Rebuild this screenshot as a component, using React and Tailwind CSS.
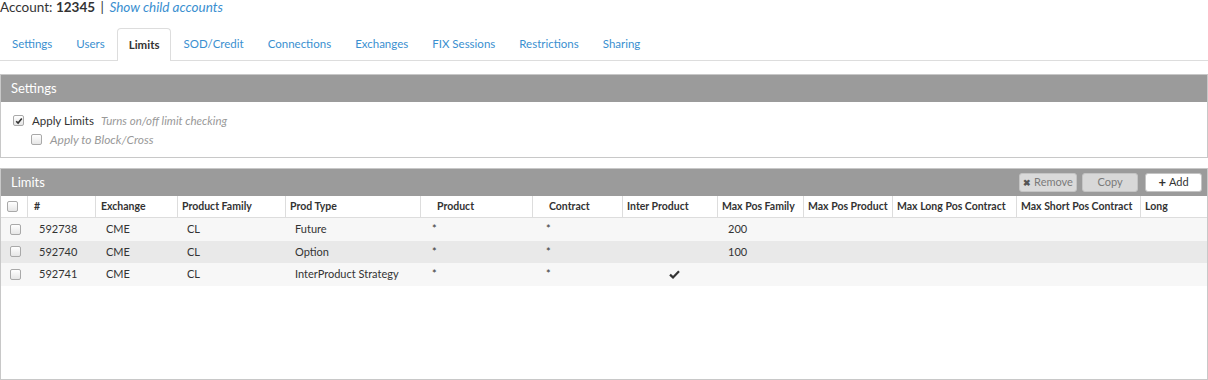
import React from "react";

const tabs = ["Settings", "Users", "Limits", "SOD/Credit", "Connections", "Exchanges", "FIX Sessions", "Restrictions", "Sharing"];

const cols = [
  { name: "", hp: "pl-[6px]", dp: "pl-[9px]" },
  { name: "#", hp: "pl-[6px]", dp: "pl-[11px]" },
  { name: "Exchange", hp: "pl-[5px]", dp: "pl-[10px]" },
  { name: "Product Family", hp: "pl-[4px]", dp: "pl-[9px]" },
  { name: "Prod Type", hp: "pl-[4px]", dp: "pl-[9px]" },
  { name: "Product", hp: "pl-[16px]", dp: "pl-[11px]" },
  { name: "Contract", hp: "pl-[16px]", dp: "pl-[13px]" },
  { name: "Inter Product", hp: "pl-[4px]", dp: "pl-[46px]" },
  { name: "Max Pos Family", hp: "pl-[4px]", dp: "pl-[10px]" },
  { name: "Max Pos Product", hp: "pl-[4px]", dp: "pl-[10px]" },
  { name: "Max Long Pos Contract", hp: "pl-[4px]", dp: "pl-[10px]" },
  { name: "Max Short Pos Contract", hp: "pl-[4px]", dp: "pl-[10px]" },
  { name: "Long", hp: "pl-[4px]", dp: "pl-[10px]" },
];

const rows = [
  { id: "592738", type: "Future", inter: false, fam: "200", bg: "bg-[#f7f7f7]" },
  { id: "592740", type: "Option", inter: false, fam: "100", bg: "bg-[#e9e9e9]" },
  { id: "592741", type: "InterProduct Strategy", inter: true, fam: "", bg: "bg-[#f7f7f7]" },
];

const grid = "grid grid-cols-[27px_68px_82px_108px_135px_112px_90px_95px_86px_89px_124px_124px_66px]";

function Box({ checked }) {
  return (
    <span className="inline-flex h-[11px] w-[11px] items-center justify-center rounded-[2px] border border-[#a9a9a9] bg-gradient-to-b from-[#ffffff] to-[#e6e6e6]">
      {checked && (
        <svg width="8" height="8" viewBox="0 0 8 8">
          <path d="M1.2 4.2 L3.1 6.1 L6.8 1.6" fill="none" stroke="#333" strokeWidth="1.6" />
        </svg>
      )}
    </span>
  );
}

function Check() {
  return (
    <svg width="11" height="9" viewBox="0 0 11 9">
      <path d="M1 4.6 L4 7.4 L10 1.2" fill="none" stroke="#333" strokeWidth="2.2" />
    </svg>
  );
}

export default function App() {
  return (
    <div className="w-[1208px] h-[380px] overflow-hidden bg-white font-['Lato',sans-serif] text-[#333]">
      <div className="h-[14px] text-[13.5px] leading-[14px] text-[#333] whitespace-nowrap">
        Account: <b className="font-bold">12345</b> <span className="px-[2px]">|</span>{" "}
        <a className="italic text-[#3a8fd0]">Show child accounts</a>
      </div>
      <div className="mt-[14px] flex h-[33px] border-b border-[#dddddd] text-[11.5px]">
        {tabs.map((t) => (
          <div
            key={t}
            className={
              t === "Limits"
                ? "-mb-px flex items-center rounded-t-[4px] border border-b-0 border-[#dddddd] bg-white px-[11px] font-bold text-[#333]"
                : "flex items-center px-[12px] text-[#3a8fd0]"
            }
          >
            {t}
          </div>
        ))}
      </div>

      <div className="mt-[13px] h-[84px] border border-[#c8c8c8]">
        <div className="flex h-[27px] items-center bg-[#9b9b9b] pl-[10px] text-[13px] text-white">Settings</div>
        <div className="pt-[9px] text-[11.5px]">
          <div className="flex h-[19px] items-center pl-[12px]">
            <Box checked />
            <span className="ml-[8px] text-[#333]">Apply Limits</span>
            <span className="ml-[7px] text-[11.5px] italic text-[#999]">Turns on/off limit checking</span>
          </div>
          <div className="flex h-[19px] items-center pl-[30px]">
            <Box />
            <span className="ml-[8px] text-[12px] italic text-[#999]">Apply to Block/Cross</span>
          </div>
        </div>
      </div>

      <div className="mt-[10px] h-[212px] border border-[#c8c8c8]">
        <div className="flex h-[27px] items-center justify-between bg-[#9b9b9b] pl-[10px] pr-[5px] text-[13px] text-white">
          <span>Limits</span>
          <div className="flex items-center gap-[5px] text-[11px]">
            <button className="flex h-[19px] w-[58px] items-center justify-center gap-[3px] rounded-[3px] border border-[#c4c4c4] bg-[#dadada] text-[#7a7a7a]">
              <span className="text-[9px] font-bold text-[#555]">✖</span>Remove
            </button>
            <button className="flex h-[19px] w-[56px] items-center justify-center rounded-[3px] border border-[#c4c4c4] bg-[#d8d8d8] text-[#7a7a7a]">
              Copy
            </button>
            <button className="ml-[2px] flex h-[19px] w-[57px] items-center justify-center gap-[3px] rounded-[3px] border border-[#c4c4c4] bg-white text-[#333]">
              <span className="text-[13px] font-bold leading-none">+</span>Add
            </button>
          </div>
        </div>
        <div className={grid + " h-[22px] border-b border-[#dddddd] bg-white text-[10.5px] font-bold text-[#333]"}>
          {cols.map((c, i) => (
            <div
              key={i}
              className={"flex items-center whitespace-nowrap overflow-hidden " + c.hp + (i < cols.length - 1 ? " border-r border-[#dddddd]" : "")}
            >
              {i === 0 ? <Box /> : c.name}
            </div>
          ))}
        </div>
        {rows.map((r) => (
          <div key={r.id} className={grid + " h-[22.5px] text-[11px] text-[#333] " + r.bg}>
            <div className={"flex items-center " + cols[0].dp}><Box /></div>
            <div className={"flex items-center " + cols[1].dp}>{r.id}</div>
            <div className={"flex items-center " + cols[2].dp}>CME</div>
            <div className={"flex items-center " + cols[3].dp}>CL</div>
            <div className={"flex items-center " + cols[4].dp}>{r.type}</div>
            <div className={"flex items-center " + cols[5].dp}>*</div>
            <div className={"flex items-center " + cols[6].dp}>*</div>
            <div className={"flex items-center " + cols[7].dp}>{r.inter && <Check />}</div>
            <div className={"flex items-center " + cols[8].dp}>{r.fam}</div>
            <div />
            <div />
            <div />
            <div />
          </div>
        ))}
      </div>
    </div>
  );
}
